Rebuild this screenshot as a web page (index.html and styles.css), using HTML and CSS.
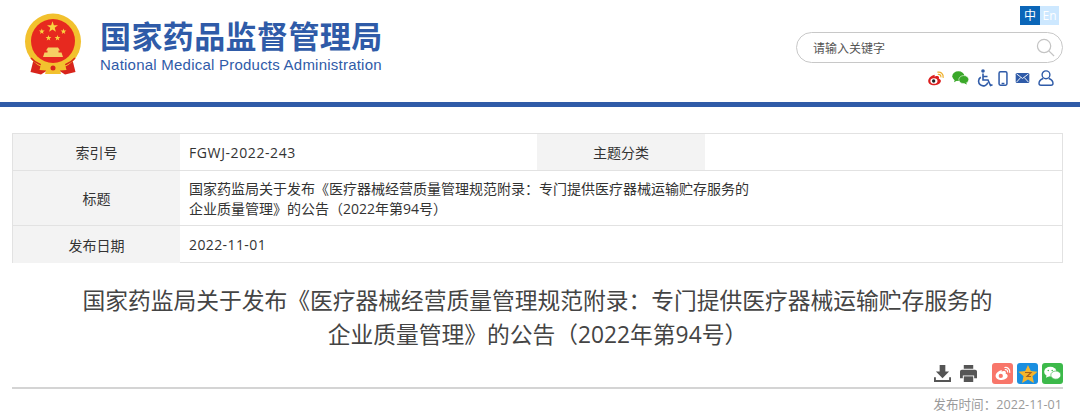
FILE: index.html
```html
<!DOCTYPE html>
<html lang="zh-CN">
<head>
<meta charset="utf-8">
<title>国家药品监督管理局</title>
<link rel="stylesheet" href="styles.css">
</head>
<body>
<header class="header">
  <div class="brand">
    <svg class="emblem" viewBox="24 13 58 62" width="58" height="62">
      <defs><path id="s" d="M0-5l1.180 3.400 3.600.1-2.870 2.180 1.030 3.450L0 2.100l-2.940 2.030 1.030-3.450L-4.780-1.500l3.600-.1z"/></defs>
      <path d="M34 58 L30.500 72 L41 74.500 L48 70 L38 60Z M72 58 L75.500 72 L65 74.500 L58 70 L68 60Z" fill="#d8241c"/>
      <circle cx="53" cy="41.500" r="28" fill="#f2c12e"/>
      <circle cx="53" cy="41" r="22" fill="#e7291f"/>
      <use href="#s" transform="translate(52.500 27) scale(1.150)" fill="#f9d540"/>
      <use href="#s" transform="translate(41.800 31.500) scale(.6)" fill="#f9d540"/>
      <use href="#s" transform="translate(63.500 31.500) scale(.6)" fill="#f9d540"/>
      <use href="#s" transform="translate(48.500 38) scale(.6)" fill="#f9d540"/>
      <use href="#s" transform="translate(57.500 38) scale(.6)" fill="#f9d540"/>
      <path d="M46 50.500L48 47.500H58L60 50.500H58.500V52.500H61.500L63 57H43L44.500 52.500H47.500V50.500Z" fill="#f6cf63"/>
      <path d="M32 52c4 8 12 11.500 21 11.500S70 60 74 52l1.500 6c-5 7-13 10-22.500 10S36 65 30.500 58z" fill="#f2c12e"/>
      <path d="M31 58c5 6 13 8.500 22 8.500s17-2.500 22-8.500" fill="none" stroke="#d8241c" stroke-width="1.500"/>
      <path d="M41 64h24l1.500 6-6.500 .5 1 3.500H45l1-3.500-6.500-.5z" fill="#f2c12e"/>
      <circle cx="53" cy="68" r="2.500" fill="#d8241c"/>
    </svg>
    <div class="brand-text">
      <div class="brand-cn">国家药品监督管理局</div>
      <div class="brand-en">National Medical Products Administration</div>
    </div>
  </div>
  <div class="tools">
    <div class="lang"><span class="lang-zh">中</span><span class="lang-en">En</span></div>
    <div class="search">
      <span>请输入关键字</span>
      <svg viewBox="0 0 20 20" width="19" height="19" fill="none" stroke="#c4c4c4" stroke-width="1.300"><circle cx="8.500" cy="8.500" r="7"/><path d="M13.500 13.500l5.500 5.500"/></svg>
    </div>
    <div class="links">
      <svg viewBox="0 0 18 16" width="18" height="15"><path d="M7.500 4C3.500 5 .5 8 .7 11c.2 3 3.800 4.500 7 4.200 3.800-.3 6.700-2.400 6.500-4.700-.1-1.400-1.300-1.900-2.200-2.200.6-1.500.2-2.800-1.600-3C9.200 5 8 5.600 7.500 6c.2-1.200 0-2.200 0-2z" fill="#dc1f1f"/><ellipse cx="6.800" cy="10.600" rx="3.800" ry="3" fill="#fff"/><circle cx="6.500" cy="10.700" r="1.800" fill="#222"/><path d="M11 1.200c3-.6 6 1.800 5.600 5.600M11.500 3.700c1.600-.3 2.900.9 2.700 2.600" fill="none" stroke="#eeb02c" stroke-width="1.300" stroke-linecap="round"/></svg>
      <svg class="gap-7" viewBox="0 0 18 15" width="17" height="14"><ellipse cx="6.700" cy="5.600" rx="6.500" ry="5.200" fill="#3aa829"/><path d="M3 9l-1 3 3.500-1.700z" fill="#3aa829"/><ellipse cx="12.500" cy="9.200" rx="5.300" ry="4.300" fill="#3aa829" stroke="#fff" stroke-width=".6"/><path d="M15 12.500l1 2-3-1z" fill="#3aa829"/></svg>
      <svg class="gap-8" viewBox="0 0 16 18" width="16" height="18"><circle cx="6" cy="2" r="1.800" fill="#2f5ba8"/><path d="M6 4.500V11h5l2.500 5.500 2-.8M3.800 8.200a4.700 4.700 0 1 0 7 5.300M6 7.500h4.500" fill="none" stroke="#2f5ba8" stroke-width="1.600"/></svg>
      <svg class="gap-5" viewBox="0 0 10 16" width="10" height="15"><rect x=".8" y=".8" width="8.400" height="14.400" rx="1.500" fill="none" stroke="#2f5ba8" stroke-width="1.600"/><path d="M3.500 13.300h3" stroke="#2f5ba8" stroke-width="1.500"/></svg>
      <svg class="gap-7" viewBox="0 0 15 11" width="15" height="10"><rect width="15" height="11" rx="1.500" fill="#2f5ba8"/><path d="M1 1l6.500 5L14 1M1 10l4.500-5M14 10L9.500 5" fill="none" stroke="#fff" stroke-width="1"/></svg>
      <svg class="gap-8" viewBox="0 0 16 16" width="16" height="16" fill="none" stroke="#2f5ba8" stroke-width="1.400"><circle cx="8" cy="4.800" r="3.900"/><path d="M5.200 8.500C2.800 9.500 1 11 1 13.300c0 1.200.7 1.900 2 1.900h10c1.300 0 2-.7 2-1.900 0-2.300-1.800-3.800-4.200-4.800"/></svg>
    </div>
  </div>
</header>

<main class="main">
  <div class="meta">
    <div class="label">索引号</div>
    <div class="value">FGWJ-2022-243</div>
    <div class="label">主题分类</div>
    <div class="value"></div>
    <div class="label">标题</div>
    <div class="value wide">国家药监局关于发布《医疗器械经营质量管理规范附录：专门提供医疗器械运输贮存服务的<br>企业质量管理》的公告（2022年第94号）</div>
    <div class="label">发布日期</div>
    <div class="value wide date-value">2022-11-01</div>
  </div>

  <h1 class="title">国家药监局关于发布《医疗器械经营质量管理规范附录：专门提供医疗器械运输贮存服务的<br>企业质量管理》的公告（2022年第94号）</h1>

  <div class="actions">
    <svg viewBox="0 0 18 18" width="17" height="17" fill="#555"><path d="M6 0h6v7h4l-7 7-7-7h4z"/><path d="M0 13h2v3h14v-3h2v5H0z"/></svg>
    <svg class="print" viewBox="0 0 18 18" width="17" height="17" fill="#555"><path d="M4 0h10v4H4z"/><path d="M2 5h14a2 2 0 0 1 2 2v7h-3v-3H3v3H0V7a2 2 0 0 1 2-2z"/><path d="M4 12h10v6H4z"/></svg>
    <span class="share weibo"><svg viewBox="0 0 18 16" width="16" height="15"><path d="M7.500 4C3.500 5 .5 8 .7 11c.2 3 3.800 4.500 7 4.200 3.800-.3 6.700-2.400 6.500-4.700-.1-1.400-1.300-1.900-2.200-2.200.6-1.500.2-2.800-1.600-3C9.200 5 8 5.600 7.500 6c.2-1.200 0-2.200 0-2z" fill="#fff"/><circle cx="6.500" cy="10.700" r="2.400" fill="#f8766a"/><path d="M11 1.200c3-.6 6 1.800 5.600 5.600M11.500 3.700c1.600-.3 2.900.9 2.700 2.600" fill="none" stroke="#fff" stroke-width="1.300" stroke-linecap="round"/></svg></span>
    <span class="share qzone"><svg viewBox="0 0 20 20" width="20" height="20"><path d="M10 1l2.800 6 6.700.8-5 4.500 1.400 6.600L10 15.500 4.100 18.900l1.400-6.600-5-4.500L7.200 7z" fill="#f7b52c"/><path d="M7 8.500h6l-4 4h4" fill="none" stroke="#a8601a" stroke-width="1.200"/></svg></span>
    <span class="share wechat"><svg viewBox="0 0 18 15" width="17" height="15"><ellipse cx="6.700" cy="5.600" rx="6.500" ry="5.200" fill="#fff"/><path d="M3 9l-1 3 3.500-1.700z" fill="#fff"/><ellipse cx="12.500" cy="9.200" rx="5.300" ry="4.300" fill="#fff" stroke="#3cb94a" stroke-width=".7"/><circle cx="4.500" cy="4.300" r=".8" fill="#3cb94a"/><circle cx="8.700" cy="4.300" r=".8" fill="#3cb94a"/></svg></span>
  </div>
  <div class="date">发布时间：2022-11-01</div>
</main>
</body>
</html>
```
FILE: styles.css
```css
* { box-sizing: border-box; }
html, body { margin: 0; padding: 0; }
body {
  width: 1080px;
  height: 420px;
  overflow: hidden;
  background: #fff;
  color: #333;
  font-family: "Open Sans", "Noto Sans CJK SC", sans-serif;
}
.header {
  height: 107px;
  border-bottom: 5px solid #2f5ba8;
  display: flex;
  justify-content: space-between;
  padding: 6px 17px 0 24px;
}
.brand { display: flex; align-items: flex-start; padding-top: 7px; gap: 18px; }
.emblem { display: block; }
.brand-text { color: #2f5ba8; padding-top: 4px; }
.brand-cn {
  font-family: "Noto Sans CJK SC", sans-serif;
  font-size: 31px;
  line-height: 36px;
  font-weight: 700;
  letter-spacing: .4px;
  white-space: nowrap;
}
.brand-en {
  font-family: "Liberation Sans", sans-serif;
  font-size: 15px;
  line-height: 18px;
  margin-top: 3px;
  letter-spacing: .23px;
  white-space: nowrap;
}
.tools { width: 267px; display: flex; flex-direction: column; align-items: flex-end; }
.lang { display: flex; font-size: 12px; line-height: 19px; text-align: center; margin-right: 4px; }
.lang-zh { width: 20px; background: #0b66b8; color: #fff; }
.lang-en { width: 19px; background: #cde8ff; color: #fff; }
.search {
  width: 267px;
  height: 31px;
  margin-top: 7px;
  border: 1px solid #c8c8c8;
  border-radius: 16px;
  display: flex;
  align-items: center;
  justify-content: space-between;
  padding: 0 7px 0 16px;
  font-size: 12px;
  color: #555;
}
.links { display: flex; align-items: center; margin: 6px 9px 0 0; height: 18px; }
.gap-5 { margin-left: 5px; }
.gap-7 { margin-left: 7px; }
.gap-8 { margin-left: 8px; }
.main { padding: 26px 17px 0 12px; }
.meta {
  display: grid;
  grid-template-columns: 167px 357px 168px 1fr;
  grid-template-rows: 37px 55px 37px;
  border: 1px solid #e2e2e2;
  height: 130px;
  font-size: 14px;
  color: #333;
}
.label {
  background: #f3f3f3;
  display: flex;
  align-items: center;
  justify-content: center;
  border-bottom: 1px solid #e2e2e2;
}
.value {
  display: flex;
  align-items: center;
  padding-left: 9px;
  border-bottom: 1px solid #e2e2e2;
  letter-spacing: .6px;
}
.wide { grid-column: span 3; line-height: 20px; display: block; padding-top: 8px; letter-spacing: 0; }
.meta > :nth-last-child(-n+2) { border-bottom: 0; }
.date-value { letter-spacing: .4px; display: flex; padding-top: 0; }
.title {
  margin: 21px 0 0;
  font-size: 22.750px;
  line-height: 34px;
  font-weight: 400;
  text-align: center;
  color: #444;
  white-space: nowrap;
}
.actions {
  height: 26px;
  margin-top: 11px;
  border-bottom: 2px solid #d4d4d4;
  display: flex;
  align-items: flex-start;
  justify-content: flex-end;
}
.actions > svg { margin-top: 2px; }
.actions > .print { margin: 2px 15px 0 9px; }
.share {
  width: 21px;
  height: 21px;
  margin-left: 4px;
  border-radius: 3px;
  display: flex;
  align-items: center;
  justify-content: center;
}
.weibo { margin-left: 0; background: #f8766a; }
.qzone { background: #1a8fe0; }
.wechat { background: #3cb94a; }
.date {
  margin-top: 7px;
  text-align: right;
  font-size: 12.600px;
  line-height: 18px;
  color: #9a9a9a;
  padding-right: 1px;
}
```
